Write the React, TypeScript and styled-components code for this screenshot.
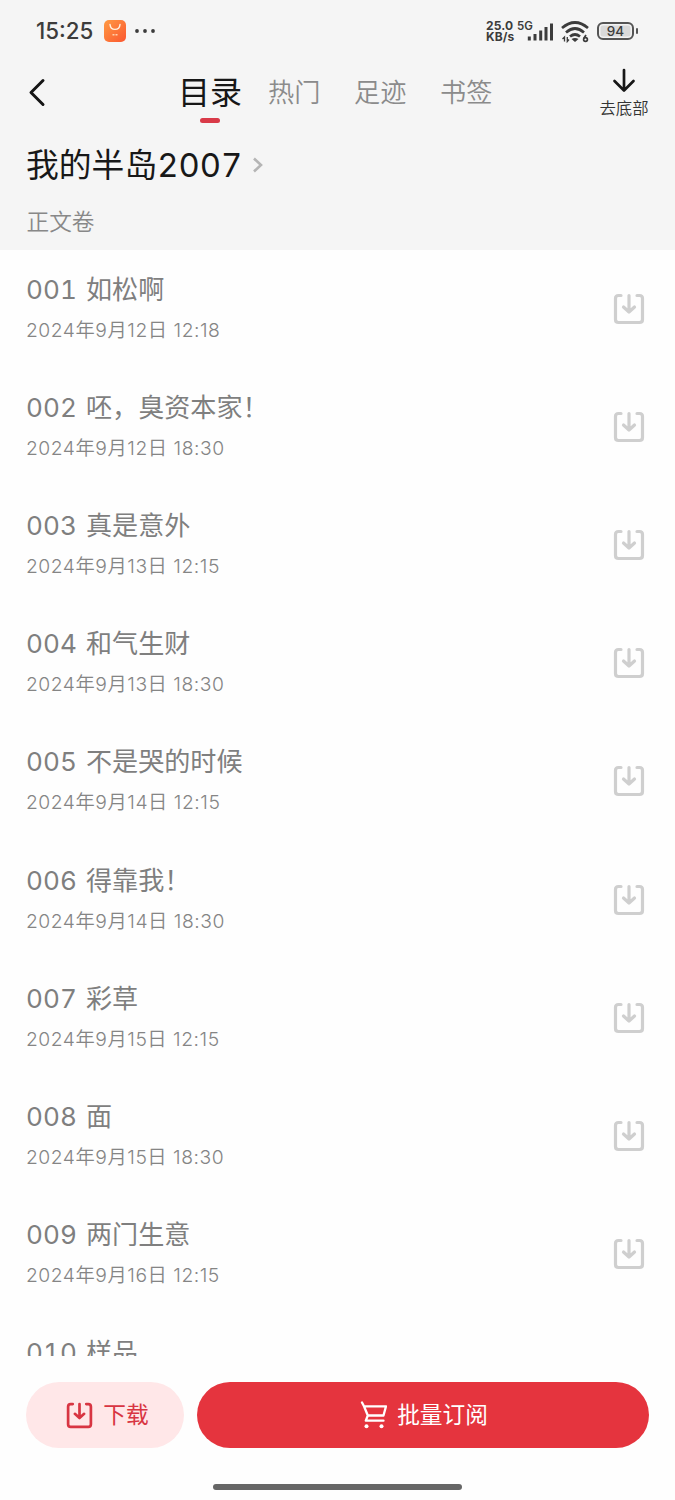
import React from "react";
import styled, { createGlobalStyle } from "styled-components";

const Global = createGlobalStyle`
  * { box-sizing: border-box; }
  body { margin: 0; background: #fff; }
  svg { display: block; flex: none; }
  button { border: 0; padding: 0; background: none; font: inherit; color: inherit; }
`;

const Screen = styled.div`
  width: 675px;
  height: 1500px;
  display: flex;
  flex-direction: column;
  overflow: hidden;
  background: #fefefe;
  font-family: Inter, "Noto Sans CJK SC", sans-serif;
  white-space: nowrap;
`;

const Header = styled.header`
  height: 250px;
  flex: none;
  background: #f5f5f5;
`;

const StatusBar = styled.div`
  height: 62px;
  padding: 0 37px 0 36px;
  display: flex;
  align-items: center;
  justify-content: space-between;
  color: #3c3c3c;
`;

const StatusGroup = styled.div`
  display: flex;
  align-items: center;
`;

const Clock = styled.span`
  width: 68px;
  font-size: 22.3px;
  line-height: 26px;
  font-weight: 450;
`;

const Speed = styled.div`
  width: 31px;
  font-size: 12px;
  line-height: 11.5px;
  font-weight: 650;
  letter-spacing: 0.1px;
`;

const NavBar = styled.nav`
  height: 66px;
  padding: 0 26px;
  display: flex;
  align-items: flex-start;
`;

const Back = styled.button`
  width: 152px;
  height: 60px;
  display: flex;
  align-items: center;
`;

const Tab = styled.div<{ $active?: boolean }>`
  width: ${(p) => (p.$active ? 90 : 86)}px;
  height: 62px;
  display: flex;
  flex-direction: column;
  font-size: ${(p) => (p.$active ? 32 : 26.2)}px;
  line-height: 62px;
  color: ${(p) => (p.$active ? "#171717" : "#8b8b8b")};
  font-weight: ${(p) => (p.$active ? 400 : 350)};
`;

const Underline = styled.span`
  width: 20px;
  height: 5px;
  margin: -6px 0 0 22px;
  flex: none;
  border-radius: 3px;
  background: #d93a48;
`;

const ToBottom = styled.button`
  width: 50px;
  margin-left: auto;
  padding-top: 5px;
  display: flex;
  flex-direction: column;
  align-items: center;
  gap: 2px;
  font-size: 16.4px;
  line-height: 22px;
  font-weight: 350;
  color: #333;
`;

const BookTitle = styled.div`
  height: 72px;
  padding: 2px 26px 0;
  display: flex;
  align-items: center;
  gap: 10px;
  font-size: 32.8px;
  line-height: 70px;
  font-weight: 400;
  font-feature-settings: "tnum";
  color: #181818;
`;

const Volume = styled.div`
  padding: 0 26.5px;
  font-size: 22.7px;
  line-height: 43px;
  font-weight: 350;
  color: #888;
`;

const List = styled.main`
  height: 1106px;
  flex: none;
  overflow: hidden;
`;

const Row = styled.div`
  height: 118.1px;
  padding: 0 30px 0 26px;
  display: flex;
  align-items: center;
  justify-content: space-between;
`;

const Chapter = styled.div`
  display: flex;
  flex-direction: column;
  gap: 2px;
`;

const ChapterName = styled.div`
  display: flex;
  font-size: 26.1px;
  line-height: 40px;
  color: #7f7f7f;
`;

const Number = styled.span`
  width: 60px;
  font-feature-settings: "tnum";
  letter-spacing: 0.1px;
`;

const PublishTime = styled.div`
  font-size: 19.3px;
  line-height: 36px;
  font-weight: 350;
  letter-spacing: 0.53px;
  color: #858585;
`;

const Footer = styled.footer`
  height: 118px;
  padding: 26px 26px 0;
  display: flex;
  gap: 13px;
`;

const Action = styled.button<{ $primary?: boolean }>`
  height: 66px;
  flex: ${(p) => (p.$primary ? "1" : "0 0 158px")};
  padding-left: ${(p) => (p.$primary ? 2 : 5)}px;
  display: flex;
  align-items: center;
  justify-content: center;
  gap: 10px;
  border-radius: 33px;
  background: ${(p) => (p.$primary ? "#e5343e" : "#ffe7e8")};
  color: ${(p) => (p.$primary ? "#fff" : "#d83542")};
  font-size: 22.7px;
`;

const ActionLabel = styled.span`
  padding-bottom: 3px;
`;

const HomeBar = styled.div`
  width: 249px;
  height: 6px;
  margin: 10px auto 0;
  border-radius: 3px;
  background: #666;
`;

const DownloadIcon = ({ size = 32, weight = 3.2 }: { size?: number; weight?: number }) => (
  <svg width={size} height={size} viewBox="0 0 32 32" fill="none" stroke="currentColor" strokeWidth={weight} strokeLinecap="round" strokeLinejoin="round">
    <path d="M8 2.5H5.5Q2.5 2.5 2.5 5.5V26.5Q2.5 29.5 5.5 29.5H26.5Q29.5 29.5 29.5 26.5V5.5Q29.5 2.5 26.5 2.5H24" />
    <path d="M16 2.5V18.5M10.5 14L16 19L21.5 14" />
  </svg>
);

const SaveMark = styled.span`
  color: #cfcfcf;
`;

const StoreIcon = () => (
  <svg width="22" height="22" viewBox="0 0 22 22">
    <defs>
      <linearGradient id="store" x1="0" y1="0" x2="1" y2="1">
        <stop offset="0" stopColor="#ff9a43" />
        <stop offset="1" stopColor="#fb5730" />
      </linearGradient>
    </defs>
    <rect width="22" height="22" rx="5" fill="url(#store)" />
    <path d="M6 4.5C6.5 11 15.500 11 16 4.500" fill="none" stroke="#fff2df" strokeWidth="1.400" strokeLinecap="round" />
    <path d="M8.500 14.800h2M11.500 14.800h2" stroke="#ffd1ad" strokeWidth="1.600" />
  </svg>
);

const MoreDots = () => (
  <svg width="20" height="4" viewBox="0 0 20 4" fill="currentColor">
    <circle cx="2" cy="2" r="1.900" />
    <circle cx="10" cy="2" r="1.900" />
    <circle cx="18" cy="2" r="1.900" />
  </svg>
);

const Network = styled.div`
  width: 44px;
  height: 24px;
  display: grid;
  > * { grid-area: 1 / 1; }
`;

const NetworkLabel = styled.span`
  padding-top: 1px;
  font-size: 11.5px;
  line-height: 12px;
  font-weight: 600;
`;

const SignalIcon = () => (
  <svg width="38" height="24" viewBox="0 0 38 24" fill="none" stroke="currentColor" strokeWidth="3">
    <path d="M12.300 17.500V21.500M18 15V21.500M23.700 11.500V21.500M29 8V21.500M34.500 4.500V21.500" />
  </svg>
);

const WifiIcon = () => (
  <svg width="29" height="24" viewBox="0 0 29 24" fill="none" stroke="currentColor" strokeWidth="2.700">
    <path d="M1 9Q14-2 27 9M5 13.500Q14 5.500 23 13.500M9 17.500Q14 13.500 19 17.500" />
    <path d="M10.500 20Q14 18 17.500 20L14 23Z" fill="currentColor" stroke="none" />
    <path d="M3.500 22.500V18L1.500 20M6.300 18V22.500L8 20.500" strokeWidth="1.300" />
    <path d="M25 16L22.800 19.500" strokeWidth="1.700" />
    <circle cx="24.500" cy="20.500" r="1.900" strokeWidth="1.700" />
  </svg>
);

const Wifi = styled.div`
  width: 36px;
`;

const Battery = styled.div`
  width: 37px;
  height: 18.500px;
  border: 2px solid #555;
  border-radius: 6px;
  background: #d9d9d9;
  box-shadow: inset 0 0 0 1.500px #f2f2f2;
  text-align: center;
  font-size: 13.500px;
  line-height: 14.500px;
  font-weight: 500;
`;

const BatteryTip = styled.span`
  width: 2px;
  height: 6px;
  margin-left: 2px;
  background: #555;
  border-radius: 1px;
`;

const Gap = styled.span`
  width: 9px;
`;

const BackIcon = () => (
  <svg width="20" height="30" viewBox="0 0 20 30" fill="none" stroke="#151515" strokeWidth="3" strokeLinecap="round" strokeLinejoin="round">
    <path d="M17 3.500L5 15.500L17 27.500" />
  </svg>
);

const DownArrow = () => (
  <svg width="26" height="28" viewBox="0 0 26 28" fill="none" stroke="#171717" strokeWidth="2.700" strokeLinecap="round" strokeLinejoin="round">
    <path d="M13 3V23M3.500 14L13 23.500L22.500 14" />
  </svg>
);

const Chevron = () => (
  <svg width="12" height="16" viewBox="0 0 12 16" fill="none" stroke="#b5b5b5" strokeWidth="2.600">
    <path d="M2 1.500L9 8L2 14.500" />
  </svg>
);

const CartIcon = () => (
  <svg width="27" height="28" viewBox="0 0 27 28" fill="none" stroke="currentColor" strokeWidth="2.300" strokeLinecap="round" strokeLinejoin="round">
    <path d="M2 1.500L4 5.300H26L23.500 14.500H7.800L4 5.300M7.800 14.500L5.800 19.700H23.500" />
    <circle cx="6.500" cy="25.300" r="2" fill="currentColor" stroke="none" />
    <circle cx="21.500" cy="25.300" r="2" fill="currentColor" stroke="none" />
  </svg>
);

const chapters = [
  ["001", "如松啊", "2024年9月12日 12:18"],
  ["002", "呸，臭资本家！", "2024年9月12日 18:30"],
  ["003", "真是意外", "2024年9月13日 12:15"],
  ["004", "和气生财", "2024年9月13日 18:30"],
  ["005", "不是哭的时候", "2024年9月14日 12:15"],
  ["006", "得靠我！", "2024年9月14日 18:30"],
  ["007", "彩草", "2024年9月15日 12:15"],
  ["008", "面", "2024年9月15日 18:30"],
  ["009", "两门生意", "2024年9月16日 12:15"],
  ["010", "样品", "2024年9月16日 18:30"],
];

export default function App() {
  return (
    <Screen lang="zh-CN">
      <Global />
      <Header>
        <StatusBar>
          <StatusGroup>
            <Clock>15:25</Clock>
            <StoreIcon />
            <Gap />
            <MoreDots />
          </StatusGroup>
          <StatusGroup>
            <Speed>
              <div>25.0</div>
              <div>KB/s</div>
            </Speed>
            <Network>
              <NetworkLabel>5G</NetworkLabel>
              <SignalIcon />
            </Network>
            <Wifi>
              <WifiIcon />
            </Wifi>
            <Battery>94</Battery>
            <BatteryTip />
          </StatusGroup>
        </StatusBar>
        <NavBar>
          <Back aria-label="返回">
            <BackIcon />
          </Back>
          <Tab $active>
            目录
            <Underline />
          </Tab>
          <Tab>热门</Tab>
          <Tab>足迹</Tab>
          <Tab>书签</Tab>
          <ToBottom>
            <DownArrow />
            去底部
          </ToBottom>
        </NavBar>
        <BookTitle>
          我的半岛2007
          <Chevron />
        </BookTitle>
        <Volume>正文卷</Volume>
      </Header>
      <List>
        {chapters.map(([number, name, time]) => (
          <Row key={number}>
            <Chapter>
              <ChapterName>
                <Number>{number}</Number>
                {name}
              </ChapterName>
              <PublishTime>{time}</PublishTime>
            </Chapter>
            <SaveMark>
              <DownloadIcon />
            </SaveMark>
          </Row>
        ))}
      </List>
      <Footer>
        <Action>
          <DownloadIcon size={27} />
          <ActionLabel>下载</ActionLabel>
        </Action>
        <Action $primary>
          <CartIcon />
          <ActionLabel>批量订阅</ActionLabel>
        </Action>
      </Footer>
      <HomeBar />
    </Screen>
  );
}
